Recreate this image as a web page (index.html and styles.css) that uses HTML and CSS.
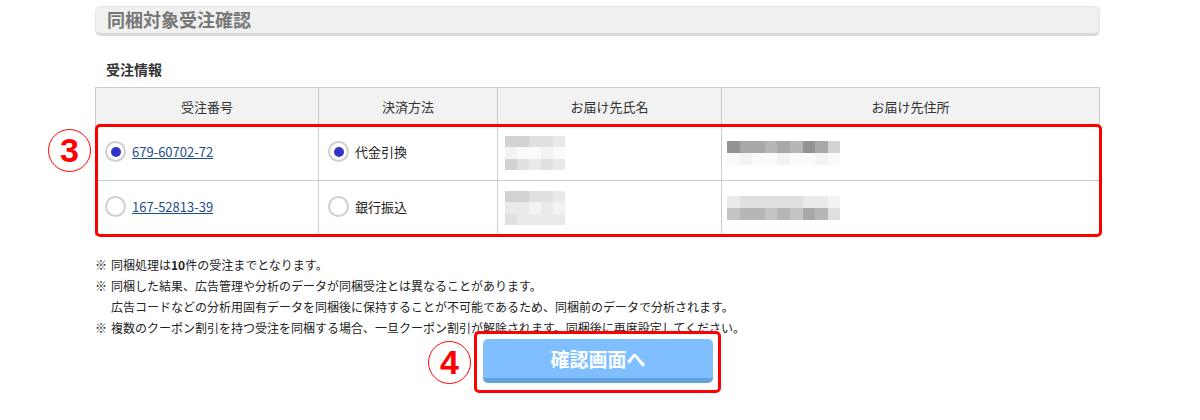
FILE: index.html
```html
<!DOCTYPE html>
<html>

<head>
    <meta charset="utf-8" />
    <title>同梱対象受注確認</title>
    <link rel="stylesheet" href="styles.css">
</head>

<body>
    <div class="page">
        <h2 class="section_title">同梱対象受注確認</h2>
        <h3 class="sub_title">受注情報</h3>

        <div class="table_box">
            <span class="mark mark_3">3</span>
            <table class="orders">
                <tr>
                    <th class="col_no">受注番号</th>
                    <th class="col_pay">決済方法</th>
                    <th class="col_name">お届け先氏名</th>
                    <th>お届け先住所</th>
                </tr>
                <tr>
                    <td><label class="radio"><i class="on"></i><a href="#">679-60702-72</a></label></td>
                    <td><label class="radio"><i class="on"></i>代金引換</label></td>
                    <td>
                        <div class="blur blur_name">
                            <p><b class="k5"></b><b class="k5"></b><b class="k6"></b><b class="k6"></b><b class="k7"></b></p>
                            <p><b class="k8"></b><b class="k9"></b><b class="k9"></b><b class="k8"></b><b class="k9"></b></p>
                            <p><b class="k5"></b><b class="k6"></b><b class="k7"></b><b class="k6"></b><b class="k7"></b></p>
                        </div>
                    </td>
                    <td>
                        <div class="blur blur_addr">
                            <p><b class="k1"></b><b class="k2"></b><b class="k2"></b><b class="k3"></b><b class="k2"></b><b class="k3"></b><b class="k1"></b><b class="k2"></b><b class="k5"></b></p>
                            <p><b class="k9"></b><b class="k8"></b><b class="k9"></b><b class="k9"></b><b class="k8"></b><b class="k9"></b><b class="k9"></b><b class="k8"></b><b class="k9"></b></p>
                        </div>
                    </td>
                </tr>
                <tr>
                    <td><label class="radio"><i></i><a href="#">167-52813-39</a></label></td>
                    <td><label class="radio"><i></i>銀行振込</label></td>
                    <td>
                        <div class="blur blur_name">
                            <p><b class="k5"></b><b class="k5"></b><b class="k6"></b><b class="k6"></b><b class="k7"></b></p>
                            <p><b class="k7"></b><b class="k7"></b><b class="k8"></b><b class="k7"></b><b class="k8"></b></p>
                            <p><b class="k6"></b><b class="k7"></b><b class="k7"></b><b class="k7"></b><b class="k7"></b></p>
                        </div>
                    </td>
                    <td>
                        <div class="blur blur_addr">
                            <p><b class="k7"></b><b class="k6"></b><b class="k6"></b><b class="k6"></b><b class="k6"></b><b class="k6"></b><b class="k7"></b><b class="k7"></b><b class="k8"></b></p>
                            <p><b class="k4"></b><b class="k3"></b><b class="k3"></b><b class="k4"></b><b class="k3"></b><b class="k4"></b><b class="k2"></b><b class="k3"></b><b class="k6"></b></p>
                        </div>
                    </td>
                </tr>
            </table>
            <div class="hl hl_rows"></div>
        </div>

        <ul class="notes">
            <li><span>※</span>
                <div>同梱処理は<strong>10</strong>件の受注までとなります。</div>
            </li>
            <li><span>※</span>
                <div>同梱した結果、広告管理や分析のデータが同梱受注とは異なることがあります。<br>広告コードなどの分析用固有データを同梱後に保持することが不可能であるため、同梱前のデータで分析されます。</div>
            </li>
            <li><span>※</span>
                <div>複数のクーポン割引を持つ受注を同梱する場合、一旦クーポン割引が解除されます。同梱後に再度設定してください。</div>
            </li>
        </ul>

        <div class="actions">
            <div class="btn_box">
                <span class="mark mark_4">4</span>
                <button class="btn_next">確認画面へ</button>
                <div class="hl hl_btn"></div>
            </div>
        </div>
    </div>
</body>

</html>
```

FILE: styles.css
```css
* {
    margin: 0;
    padding: 0;
    box-sizing: border-box;
}

body {
    font-family: "Noto Sans CJK JP", "Noto Sans", sans-serif;
    color: #222;
    background: #fff;
}

.page {
    width: 1005px;
    margin-left: 95px;
    padding-top: 6px;
}

/* 見出し */
.section_title {
    height: 30px;
    line-height: 25px;
    padding-left: 11px;
    font-size: 18px;
    font-weight: bold;
    color: #777;
    background: #f0f0f0;
    border: 1px solid #e4e4e4;
    border-bottom: 3px solid #d8d8d8;
    border-radius: 6px;
}

.sub_title {
    margin-top: 22px;
    height: 22px;
    line-height: 22px;
    padding-left: 11px;
    font-size: 14px;
    font-weight: bold;
    color: #333;
}

/* 受注テーブル */
.table_box {
    position: relative;
    margin-top: 7px;
}

.orders {
    width: 100%;
    border-collapse: collapse;
    font-size: 13px;
}

.orders th,
.orders td {
    border: 1px solid #ccc;
    text-align: left;
}

.orders th {
    height: 38px;
    font-weight: normal;
    text-align: center;
    color: #333;
    background: #f2f2f2;
}

.orders td {
    height: 55px;
    padding: 0 9px;
}

.col_no {
    width: 223px;
}

.col_pay {
    width: 179px;
}

.col_name {
    width: 224px;
}

.radio {
    display: flex;
    align-items: center;
    gap: 6px;
    margin-top: -3px;
}

.radio i {
    width: 21px;
    height: 21px;
    border: 2px solid #cfcfcf;
    border-radius: 50%;
    display: flex;
    align-items: center;
    justify-content: center;
}

.radio i.on::after {
    content: "";
    width: 10px;
    height: 10px;
    border-radius: 50%;
    background: #3333cc;
}

.radio a {
    color: #1f4e8c;
    text-decoration: underline;
}

/* モザイク */
.blur p {
    display: flex;
}

.blur b {
    display: block;
}

.blur_name {
    margin-left: -2px;
}

.blur_name b {
    width: 12px;
    height: 11.5px;
}

.blur_addr b {
    width: 12.6px;
    height: 12px;
}

.blur_addr {
    margin-left: -4px;
}

.k1 { background: #939393; }
.k2 { background: #a8a8a8; }
.k3 { background: #b6b6b6; }
.k4 { background: #c4c4c4; }
.k5 { background: #d2d2d2; }
.k6 { background: #e0e0e0; }
.k7 { background: #eaeaea; }
.k8 { background: #f3f3f3; }
.k9 { background: #fafafa; }

/* 注意書き */
.notes {
    margin-top: 18px;
    font-size: 12px;
    line-height: 21px;
    color: #222;
}

.notes li {
    list-style: none;
    display: flex;
}

.notes li span {
    width: 16px;
    flex-shrink: 0;
}

/* ボタン */
.actions {
    display: flex;
    justify-content: center;
    margin-top: 1px;
    padding-bottom: 30px;
}

.btn_box {
    position: relative;
    margin-left: 1px;
}

.btn_next {
    width: 230px;
    height: 44px;
    border: none;
    border-bottom: 5px solid #63a2dc;
    border-radius: 5px;
    background: #80bfff;
    color: #fff;
    font-family: "Noto Sans CJK JP", sans-serif;
    font-size: 19px;
    font-weight: bold;
    line-height: 39px;
}

/* 注釈の赤枠と番号 */
.hl {
    position: absolute;
    border: 3px solid #f00;
    border-radius: 5px;
    pointer-events: none;
}

.hl_rows {
    left: 0;
    top: 37px;
    width: 1007px;
    height: 113px;
}

.hl_btn {
    left: -9px;
    top: -8px;
    width: 247px;
    height: 62px;
}

.mark {
    position: absolute;
    width: 43px;
    height: 43px;
    border: 1.5px solid #f00;
    border-radius: 50%;
    color: #f00;
    font-family: "Liberation Sans", sans-serif;
    font-size: 34px;
    font-weight: bold;
    line-height: 40px;
    text-align: center;
}

.mark_3 {
    left: -47px;
    top: 42px;
}

.mark_4 {
    left: -55px;
    top: 2px;
}
```
